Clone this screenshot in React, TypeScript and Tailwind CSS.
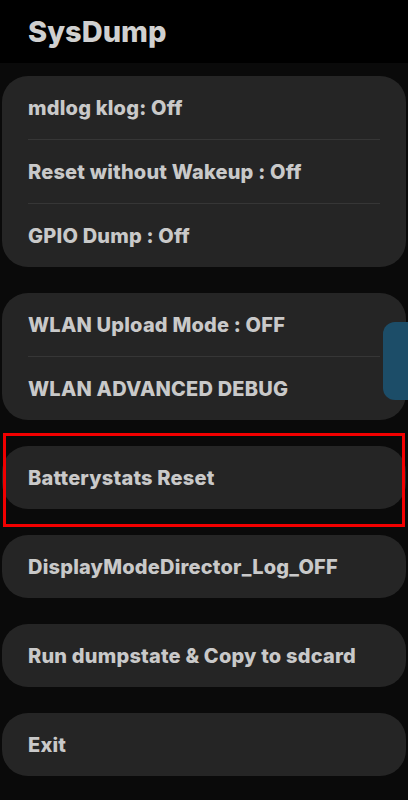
import React from 'react';

const font = { fontFamily: 'Inter, "Noto Sans", sans-serif' };

type Group = string[];

const groups: Group[] = [
    ['mdlog klog: Off', 'Reset without Wakeup : Off', 'GPIO Dump : Off'],
    ['WLAN Upload Mode : OFF', 'WLAN ADVANCED DEBUG'],
    ['Batterystats Reset'],
    ['DisplayModeDirector_Log_OFF'],
    ['Run dumpstate & Copy to sdcard'],
    ['Exit'],
];

const Card: React.FC<{ items: Group; marked?: boolean }> = ({ items, marked }) => (
    <div className="relative mx-[2px] rounded-[26px] bg-[#252525]">
        {items.map((label, i) => (
            <div key={label} className="px-[26px]">
                {i > 0 && <div className="h-px bg-[#363636]" />}
                <div className="flex h-[63px] items-center text-[20px] font-extrabold tracking-[0.2px] text-[#c9c9c9]">
                    {label}
                </div>
            </div>
        ))}
        {marked && (
            <span className="pointer-events-none absolute -top-[13px] -bottom-[18px] left-[1px] right-[1px] border-[3px] border-[#f20000]" />
        )}
    </div>
);

const App: React.FC = () => {
    return (
        <div className="relative min-h-[800px] w-[408px] bg-[#0a0a0a]" style={font}>
            <header className="flex h-[63px] items-center bg-black px-[28px]">
                <h1 className="text-[29px] font-extrabold leading-none text-[#d0d0d0]">SysDump</h1>
            </header>
            <div className="flex flex-col gap-[26px] pt-[13px]">
                {groups.map((items, i) => (
                    <Card key={i} items={items} marked={i === 2} />
                ))}
            </div>
            {/* scroll thumb */}
            <div className="absolute right-0 top-[322px] h-[78px] w-[25px] rounded-l-[12px] bg-[#1c4d68]" />
        </div>
    );
};

export default App;
